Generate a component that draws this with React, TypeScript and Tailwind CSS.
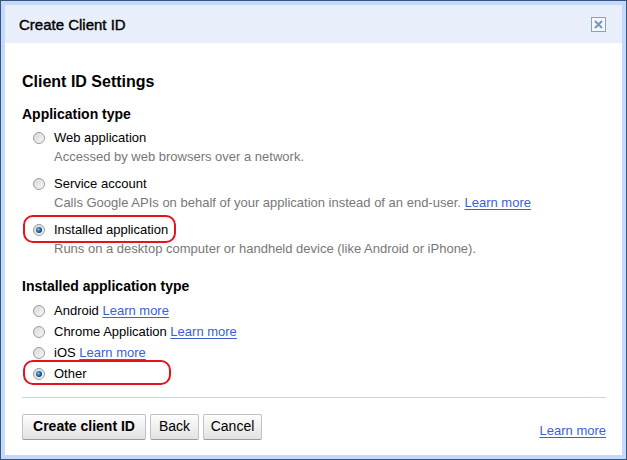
import type { ReactNode } from "react";

const FONT = "font-['Liberation_Sans',Arial,sans-serif]";

function Radio({ checked = false }: { checked?: boolean }) {
  return (
    <svg width="12" height="12" viewBox="0 0 12 12" className="flex-none">
      <defs>
        <linearGradient id="rg-off" x1="0" y1="0" x2="1" y2="1">
          <stop offset="0" stopColor="#cfcfcf" />
          <stop offset="1" stopColor="#ffffff" />
        </linearGradient>
        <radialGradient id="rg-dot" cx="0.4" cy="0.4" r="0.6">
          <stop offset="0" stopColor="#7cc4f0" />
          <stop offset="0.6" stopColor="#1f6fb0" />
          <stop offset="1" stopColor="#0d3c66" />
        </radialGradient>
      </defs>
      <circle cx="6" cy="6" r="5.5" fill="url(#rg-off)" stroke="#9c9c9c" />
      <circle cx="6" cy="6" r="4" fill="none" stroke="#e8e8e8" strokeWidth="0.8" />
      {checked && <circle cx="6" cy="6" r="3" fill="url(#rg-dot)" />}
    </svg>
  );
}

function Link({ children }: { children: ReactNode }) {
  return <a className="text-[#3a5fd6] underline underline-offset-[2px]">{children}</a>;
}

type Opt = { label: string; desc?: ReactNode; checked?: boolean; ring?: "installed" | "other"; link?: boolean };

const APP_TYPES: Opt[] = [
  { label: "Web application", desc: "Accessed by web browsers over a network." },
  {
    label: "Service account",
    desc: (
      <>
        Calls Google APIs on behalf of your application instead of an end-user. <Link>Learn more</Link>
      </>
    ),
  },
  {
    label: "Installed application",
    desc: "Runs on a desktop computer or handheld device (like Android or iPhone).",
    checked: true,
    ring: "installed",
  },
];

const INSTALLED_TYPES: Opt[] = [
  { label: "Android", link: true },
  { label: "Chrome Application", link: true },
  { label: "iOS", link: true },
  { label: "Other", checked: true, ring: "other" },
];

function Ring({ kind }: { kind: "installed" | "other" }) {
  // red marker drawn over the screenshot
  return kind === "installed" ? (
    <span className="pointer-events-none absolute left-[-10px] top-[-5px] h-[28px] w-[153px] rounded-[10px] border-2 border-[#e3121b]" />
  ) : (
    <span className="pointer-events-none absolute left-[-10px] top-[-4px] h-[25px] w-[148px] rounded-[10px] border-2 border-[#e3121b]" />
  );
}

export default function App() {
  return (
    <div className={`${FONT} h-[460px] w-[627px] border border-[#3b5478] bg-[#c3d9ff] p-[4px]`}>
      <div className="flex h-full flex-col bg-white">
        <div className="flex h-[38px] flex-none items-center justify-between bg-[#e8eefa] pl-[14px] pr-[16px]">
          <h2 className="text-[15px] leading-none text-black [-webkit-text-stroke:0.4px_black]">Create Client ID</h2>
          <button className="flex h-[15px] w-[15px] items-center justify-center border border-[#8aa0bf] bg-[#f3f6fc]">
            <svg width="9" height="9" viewBox="0 0 9 9">
              <path d="M1 1 L8 8 M8 1 L1 8" stroke="#7b95b8" strokeWidth="2" />
            </svg>
          </button>
        </div>

        <div className="flex flex-1 flex-col pl-[17px] pr-[16px] pt-[29px] text-[13px] text-black">
          <h3 className="text-[16px] font-bold leading-[20px]">Client ID Settings</h3>

          <h4 className="mt-[13px] text-[14px] font-bold leading-[18px]">Application type</h4>
          <div className="mt-[5px] flex flex-col gap-[8px] pl-[11px]">
            {APP_TYPES.map((o) => (
              <div key={o.label} className="flex flex-col">
                <div className="flex h-[19px] items-center">
                  <span className="relative flex items-center gap-[9px]">
                    {o.ring && <Ring kind={o.ring} />}
                    <Radio checked={o.checked} />
                    <span className="leading-[19px]">{o.label}</span>
                  </span>
                </div>
                <div className="pl-[21px] leading-[19px] text-[#777]">{o.desc}</div>
              </div>
            ))}
          </div>

          <h4 className="mt-[19px] text-[14px] font-bold leading-[18px]">Installed application type</h4>
          <div className="mt-[5px] flex flex-col pl-[11px]">
            {INSTALLED_TYPES.map((o) => (
              <div key={o.label} className="flex h-[21px] items-center">
                <span className="relative flex items-center gap-[9px]">
                  {o.ring && <Ring kind={o.ring} />}
                  <Radio checked={o.checked} />
                  <span className="leading-[19px]">
                    {o.label} {o.link && <Link>Learn more</Link>}
                  </span>
                </span>
              </div>
            ))}
          </div>

          <div className="mt-[13px] h-px bg-[#cbd6ea]" />

          <div className="mt-[15px] flex items-center justify-between">
            <div className="flex gap-[4px]">
              <button className="h-[26px] w-[124px] rounded-[2px] border border-[#c2c2c2] border-b-[#9a9a9a] bg-gradient-to-b from-[#fdfdfd] to-[#e2e2e2] text-[14px] font-bold">
                Create client ID
              </button>
              <button className="h-[26px] w-[49px] rounded-[2px] border border-[#c2c2c2] border-b-[#9a9a9a] bg-gradient-to-b from-[#fdfdfd] to-[#e2e2e2] text-[14px]">
                Back
              </button>
              <button className="h-[26px] w-[59px] rounded-[2px] border border-[#c2c2c2] border-b-[#9a9a9a] bg-gradient-to-b from-[#fdfdfd] to-[#e2e2e2] text-[14px]">
                Cancel
              </button>
            </div>
            <div className="mt-[8px]">
              <Link>Learn more</Link>
            </div>
          </div>
        </div>
      </div>
    </div>
  );
}
